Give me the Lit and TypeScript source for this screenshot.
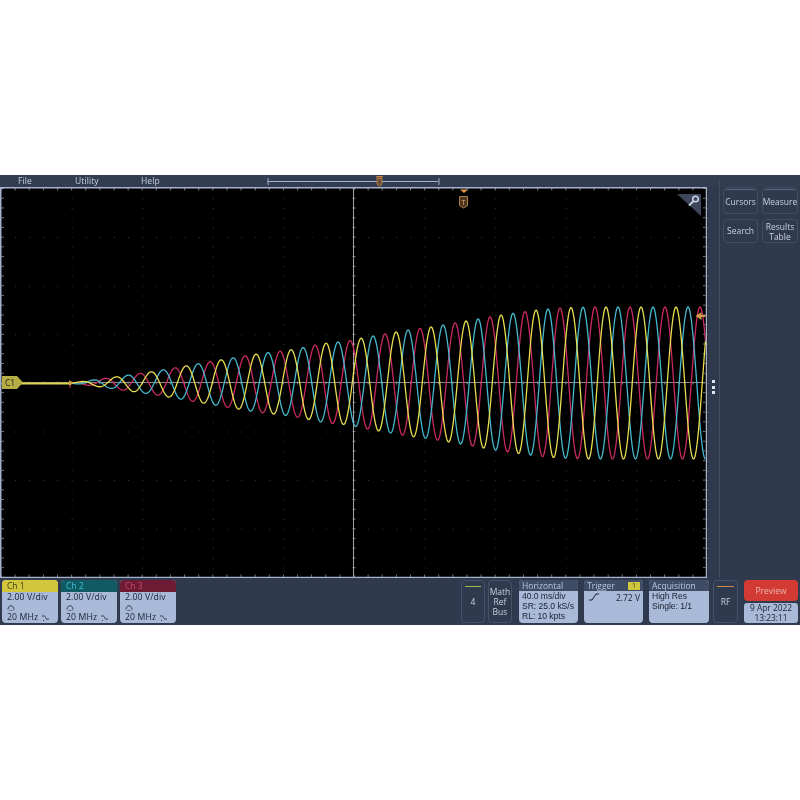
import { LitElement, html, css, svg } from "lit";
import { customElement } from "lit/decorators.js";

const CX = 383;
const AMP: [number, number][] = [
  [70, 0], [90, 2.5], [115, 6], [150, 11], [163, 13], [185, 17], [220, 23], [256, 29], [291, 33],
  [326, 40], [350, 42], [361, 45], [385, 49], [407, 53], [431, 56], [466, 62], [501, 68],
  [536, 73], [559, 75], [590, 76], [720, 76],
];
function linearAmp(x: number) {
  if (x <= 70) return 0;
  for (let i = 1; i < AMP.length; i++) {
    if (x <= AMP[i][0]) {
      const [x0, a0] = AMP[i - 1];
      const [x1, a1] = AMP[i];
      return a0 + ((a1 - a0) * (x - x0)) / (x1 - x0);
    }
  }
  return 76;
}
function ampAt(x: number) {
  let sum = 0;
  for (let k = -4; k <= 4; k++) sum += linearAmp(x + k * 2);
  return sum / 9;
}
function trace(peak: number) {
  const T = 35;
  let d = "";
  for (let x = 70; x <= 705.5; x += 0.5) {
    const y = CX - ampAt(x) * Math.cos((2 * Math.PI * (x - peak)) / T);
    d += (d ? "L" : "M") + x.toFixed(1) + " " + y.toFixed(2);
  }
  return d;
}

const W = 708, TOP = 187, H = 391;
function grid() {
  const out: unknown[] = [];
  const dx = 70.6, dy = 48.6;
  const y0 = 188.5;
  const vs = Array.from({ length: 11 }, (_, i) => 1 + i * dx);
  const hs = Array.from({ length: 9 }, (_, i) => y0 + i * dy);
  let dots = "";
  for (const x of vs) for (let y = y0; y < 578; y += dy / 5) dots += `M${x.toFixed(1)} ${y.toFixed(1)}h1v1h-1z`;
  for (const y of hs) for (let x = 1; x < 706; x += dx / 5) dots += `M${x.toFixed(1)} ${y.toFixed(1)}h1v1h-1z`;
  out.push(svg`<path class="dots" d=${dots}></path>`);
  let ticks = "";
  for (let x = 1; x < 706; x += dx / 5) ticks += `M${x.toFixed(1)} 188v2.5M${x.toFixed(1)} 577v-2.5`;
  for (let y = y0; y < 578; y += dy / 5) ticks += `M1.5 ${y.toFixed(1)}h2.5M705.5 ${y.toFixed(1)}h-2.5`;
  let cross = "";
  for (let x = 1; x < 706; x += dx / 5) cross += `M${x.toFixed(1)} 381.5v3`;
  for (let y = y0; y < 578; y += dy / 5) cross += `M352.5 ${y.toFixed(1)}h3`;
  out.push(svg`<path class="ticks" d=${ticks}></path><path class="ticks" d=${cross}></path>`);
  return out;
}

const channels = [
  { name: "Ch 1", cls: "c1" },
  { name: "Ch 2", cls: "c2" },
  { name: "Ch 3", cls: "c3" },
];

@customElement("app-root")
export class AppRoot extends LitElement {
  static styles = css`
    :host { display: block; padding-top: 175px; height: 625px; background: #fff; font-family: "Open Sans", "Liberation Sans", sans-serif; }
    .screen { display: grid; grid-template-columns: 708px 92px; grid-template-rows: 12px 391px 47px; height: 450px; background: #2f3a4e; color: #c9d1e0; filter: blur(0.4px); overflow: hidden; }
    .menu { grid-column: 1 / 3; display: flex; align-items: center; position: relative; font-size: 8.5px; background: #323d52; letter-spacing: 0.1px; }
    .menu span { position: absolute; top: 0; line-height: 12px; }
    .m1 { left: 18px; } .m2 { left: 75px; } .m3 { left: 141px; }
    .mark { position: absolute; left: 260px; top: 0; }
    .plot { position: relative; background: #000; }
    .plot svg { position: absolute; left: 0; top: 0; width: 708px; height: 391px; display: block; }
    .frame { fill: none; stroke: #a6b2cc; stroke-width: 1.5; }
    .dots { fill: #3a3a3a; }
    .ticks { stroke: #6d7584; stroke-width: 1; fill: none; }
    .center { stroke: #a3a3a3; stroke-width: 1; }
    .hcenter { stroke: #8f8a88; stroke-width: 1; }
    .t { fill: none; stroke-width: 1.3; stroke-linejoin: round; }
    .t1 { stroke: #e8df50; } .t2 { stroke: #44b9cf; } .t3 { stroke: #c92a62; }
    .lead { stroke: #e0d64a; stroke-width: 2; }
    .badge { fill: #b7ad45; }
    .badge-text { font-size: 8.5px; fill: #1b1d18; font-family: "Open Sans", sans-serif; }
    .side { position: relative; display: grid; grid-template-columns: 35px 36px; grid-template-rows: 27px 24px; gap: 5px 4px; padding: 0 0 0 15px; align-content: start; background: #2f3a4e; }
    .side::before { content: ""; position: absolute; left: 11px; top: -8px; bottom: 0; width: 1px; background: #414d63; }
    .dots3 { position: absolute; left: 4px; top: 193px; display: flex; flex-direction: column; gap: 2.500px; }
    .dots3 i { width: 3px; height: 3px; background: #dfe5f0; display: block; }
    .btn { border: 1px solid #414d63; border-radius: 4px; display: flex; align-items: center; justify-content: center; text-align: center; font-size: 8.5px; line-height: 10px; color: #c9d1e0; position: relative; }
    .btn.hl { padding-top: 3px; }
    .btn.low { padding-top: 1px; }
    .btn.hl::before { content: ""; position: absolute; left: 2px; right: 2px; top: 1px; height: 1px; background: #5c6a80; }
    .bar { grid-column: 1 / 3; display: flex; padding: 2px; gap: 3px; font-size: 8.5px; line-height: 10px; }
    .card { width: 56px; border-radius: 4px; background: #a9bad8; color: #1a2030; overflow: hidden; display: flex; flex-direction: column; }
    .card header { height: 12px; line-height: 12px; padding: 0 5px; flex: none; }
    .c1 header { background: #d2c63c; color: #3a3a10; }
    .c2 header { background: #0f5a63; color: #3fc3cf; }
    .c3 header { background: #6d1a34; color: #c9496f; }
    .cbody { padding: 0 5px; display: flex; flex-direction: column; font-size: 8.7px; letter-spacing: 0.1px; }
    .cbody div { height: 10px; line-height: 10px; white-space: nowrap; display: flex; align-items: center; gap: 3px; }
    .cbody svg { width: 9px; height: 9px; fill: none; stroke: #2a3244; stroke-width: 0.9; }
    .spacer { flex: 1; }
    .outline { width: 24px; border: 1px solid #45516a; border-radius: 4px; box-sizing: border-box; display: flex; flex-direction: column; align-items: center; justify-content: center; text-align: center; position: relative; color: #c9d1e0; }
    .outline div { height: 10px; line-height: 10px; }
    .outline i { position: absolute; left: 3px; right: 3px; top: 5px; height: 1px; }
    .g i { background: #9fc04a; }
    .o i { background: #cf8a4a; }
    .wide { border-radius: 4px; overflow: hidden; display: flex; flex-direction: column; background: #a9bad8; color: #1a2030; }
    .wide header { height: 11px; line-height: 11px; padding: 0 3px; background: #3e4c64; color: #b9c6dc; display: flex; justify-content: space-between; align-items: center; flex: none; }
    .in { padding: 0 3px; font-family: "Liberation Sans", sans-serif; font-size: 8.6px; letter-spacing: -0.05px; }
    .in div { height: 10px; line-height: 10px; white-space: nowrap; }
    .trigger-val { display: flex; justify-content: space-between; padding: 0 3px 0 5px; line-height: 13px; }
    .trigger-val svg { width: 10px; height: 8px; stroke: #1a2030; fill: none; stroke-width: 1; margin-top: 2px; }
    .tag { width: 12px; height: 8px; background: #d2c63c; color: #3a3a10; font-size: 7px; line-height: 8px; text-align: center; }
    .w59 { width: 59px; } .w60 { width: 60px; }
    .ml4 { margin-left: 4px; } .ml3 { margin-left: 3px; } .ml1 { margin-left: 1px; }
    .rf { width: 25px; }
    .right { width: 54px; display: flex; flex-direction: column; gap: 2px; }
    .preview { height: 21px; border-radius: 4px; background: #d43a34; color: #e8b7b0; display: flex; align-items: center; justify-content: center; }
    .date { height: 20px; border-radius: 3px; background: #a9bad8; color: #1a2030; text-align: center; font-size: 8.4px; }
    .date div { height: 10px; line-height: 10px; }
  `;

  private cards() {
    return channels.map(
      (c) => html`<div class="card ${c.cls}">
        <header>${c.name}</header>
        <div class="cbody">
          <div>2.00 V/div</div>
          <div><svg viewBox="0 0 9 9"><path d="M1 6.500C1 1.500 7 1.500 7 6.500"></path><path d="M2.500 7.500h4" stroke-dasharray="1 .8"></path></svg></div>
          <div>20 MHz <svg viewBox="0 0 9 9"><path d="M1 3h2.500c1 0 1 3 2 3H8"></path><path d="M2 7.500h1"></path></svg></div>
        </div>
      </div>`
    );
  }

  render() {
    return html`<div class="screen">
      <div class="menu">
        <span class="m1">File</span><span class="m2">Utility</span><span class="m3">Help</span>
        <svg class="mark" width="190" height="18" viewBox="260 175 190 18">
          <path d="M268.500 178.500h-.5v6h.5M438.500 178.500h.5v6h-.5M268 181.500h170" fill="none" stroke="#a6b2cc"></path>
          <path d="M376 176h7l-.5 1.500h-6z" fill="#c8803c"></path>
          <path d="M377 178.500h5v5.500l-2.500 2.500-2.500-2.500z" fill="#6e5137" stroke="#b07a45"></path>
        </svg>
      </div>
      <div class="plot">
        <svg viewBox="0 ${TOP} ${W} ${H}">
          ${grid()}
          <line class="hcenter" x1="2" x2="705" y1="382.500" y2="382.500"></line>
          <line class="center" x1="353.500" x2="353.500" y1="188" y2="577"></line>
          <path class="t t3" d=${trace(175)}></path>
          <path class="t t2" d=${trace(163)}></path>
          <path class="t t1" d=${trace(151)}></path>
          <line class="lead" x1="20" x2="71" y1="383.500" y2="383.500"></line>
          <path d="M70 381v7" stroke="#c92a62" stroke-width="1"></path>
          <path d="M69 380l4 3-4 3z" fill="#d0a238"></path>
          <path class="badge" d="M2 376h15l6 6.500-6 6.500H2z"></path>
          <text class="badge-text" x="5" y="385.500">C1</text>
          <path d="M460 189.500h8l-4 3.500z" fill="#e8963c"></path>
          <path d="M459.500 196.500h8v9l-4 2.500-4-2.500z" fill="#4a3524" stroke="#b07a45"></path>
          <text x="463.500" y="204.500" text-anchor="middle" font-size="8" fill="#e0a060" font-family="Open Sans">T</text>
          <path d="M677 194h24v22z" fill="#3d465a"></path>
          <circle cx="695.500" cy="199" r="2.800" fill="none" stroke="#cdd6e6" stroke-width="1.500"></circle>
          <path d="M693.500 201.200l-4.500 4.300" stroke="#cdd6e6" stroke-width="1.800"></path>
          <path d="M695.500 316l6-4v3h4v2h-4v3z" fill="#d09a48"></path>
          <path class="frame" d="M.75 ${TOP + 0.75}H706.500V577.500H.75z"></path>
        </svg>
      </div>
      <div class="side">
        <div class="dots3"><i></i><i></i><i></i></div>
        <div class="btn hl">Cursors</div>
        <div class="btn hl">Measure</div>
        <div class="btn">Search</div>
        <div class="btn low">Results<br />Table</div>
      </div>
      <div class="bar">
        ${this.cards()}
        <div class="spacer"></div>
        <div class="outline g"><i></i><div>4</div></div>
        <div class="outline"><div>Math</div><div>Ref</div><div>Bus</div></div>
        <div class="wide w59 ml4">
          <header>Horizontal</header>
          <div class="in"><div>40.0 ms/div</div><div>SR: 25.0 kS/s</div><div>RL: 10 kpts</div></div>
        </div>
        <div class="wide w59 ml3">
          <header>Trigger <span class="tag">1</span></header>
          <div class="trigger-val"><svg viewBox="0 0 10 8"><path d="M0 7h3l4-6h3"></path></svg>2.72 V</div>
        </div>
        <div class="wide w60 ml3">
          <header>Acquisition</header>
          <div class="in"><div>High Res</div><div>Single: 1/1</div></div>
        </div>
        <div class="outline o rf ml1"><i></i><div>RF</div></div>
        <div class="right ml3">
          <div class="preview">Preview</div>
          <div class="date"><div>9 Apr 2022</div><div>13:23:11</div></div>
        </div>
      </div>
    </div>`;
  }
}
